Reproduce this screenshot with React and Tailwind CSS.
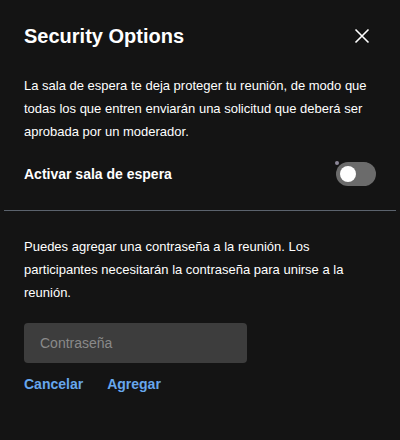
export default function App() {
  return (
    <div className="w-[400px] h-[440px] bg-[#141414] text-white font-['Liberation_Sans',Arial,sans-serif] overflow-hidden">
      <div className="px-6 pt-[22px]">
        <div className="flex items-center justify-between">
          <h1 className="text-[20px] leading-[28px] font-bold">Security Options</h1>
          <button className="mr-[6px] text-white" aria-label="Close">
            <svg width="16" height="16" viewBox="0 0 16 16" fill="none" stroke="currentColor" strokeWidth="1.6">
              <path d="M1.5 1.5L14.5 14.5M14.5 1.5L1.5 14.5" />
            </svg>
          </button>
        </div>
        <p className="mt-[25px] text-[13px] leading-[22.75px]">
          La sala de espera te deja proteger tu reunión, de modo que todas los que entren enviarán una solicitud que deberá ser aprobada por un moderador.
        </p>
        <div className="mt-[19px] flex items-center justify-between h-6">
          <span className="text-[14px] leading-5 font-bold">Activar sala de espera</span>
          <div className="relative w-10 h-6 rounded-full bg-[#6b6b6b]">
            <span className="absolute left-1 top-1 w-4 h-4 rounded-full bg-white" />
            <span className="absolute -left-[1px] -top-[1px] w-[4px] h-[4px] rounded-full bg-[#8d8899]" />
          </div>
        </div>
      </div>
      <div className="mt-6 mx-1 h-px bg-[#5b636d]" />
      <div className="px-6">
        <p className="mt-[25px] text-[13px] leading-[22.75px]">
          Puedes agregar una contraseña a la reunión. Los participantes necesitarán la contraseña para unirse a la reunión.
        </p>
        <input
          type="password"
          placeholder="Contraseña"
          className="mt-[18px] block w-[223px] h-10 rounded-[4px] bg-[#3d3d3d] px-4 text-[14px] text-white placeholder:text-[#8a8a8a] outline-none"
        />
        <div className="mt-[11px] flex gap-6 text-[14px] leading-5 font-bold text-[#67a7ed]">
          <button>Cancelar</button>
          <button>Agregar</button>
        </div>
      </div>
    </div>
  );
}
